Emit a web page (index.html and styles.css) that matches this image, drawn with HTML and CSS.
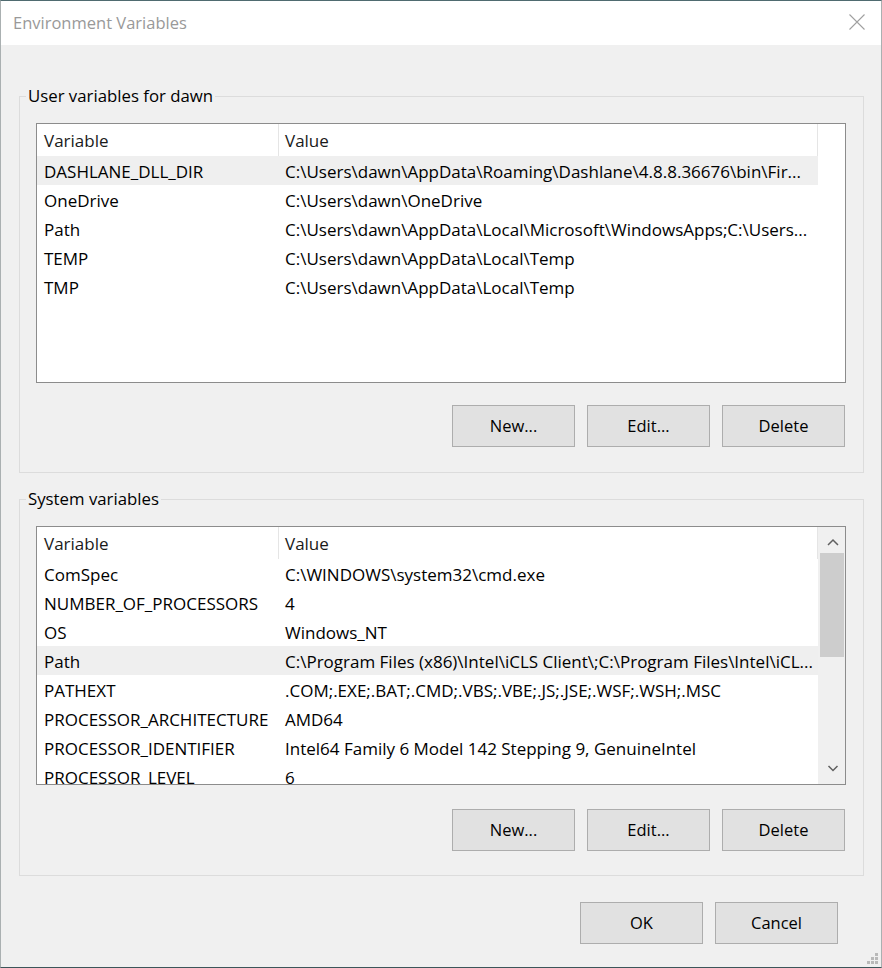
FILE: index.html
```html
<!DOCTYPE html>
<html lang="en">
<head>
<meta charset="utf-8">
<title>Environment Variables</title>
<link rel="stylesheet" href="styles.css">
</head>
<body>
<div class="window">
  <div class="titlebar">
    <span class="title">Environment Variables</span>
    <svg class="close" width="16" height="16" viewBox="0 0 16 16"><path d="M0.5 0.5 L15.5 15.5 M15.5 0.5 L0.5 15.5" stroke="#a0a0a0" stroke-width="1.1" fill="none"/></svg>
  </div>
  <div class="content">
    <fieldset class="group group-user">
      <legend>User variables for dawn</legend>
      <div class="list">
        <div class="table">
          <div class="hdr"><div class="c1">Variable</div><div class="c2">Value</div></div>
          <div class="row sel"><div class="c1">DASHLANE_DLL_DIR</div><div class="c2">C:\Users\dawn\AppData\Roaming\Dashlane\4.8.8.36676\bin\Fir...</div></div>
          <div class="row"><div class="c1">OneDrive</div><div class="c2">C:\Users\dawn\OneDrive</div></div>
          <div class="row"><div class="c1">Path</div><div class="c2">C:\Users\dawn\AppData\Local\Microsoft\WindowsApps;C:\Users...</div></div>
          <div class="row"><div class="c1">TEMP</div><div class="c2">C:\Users\dawn\AppData\Local\Temp</div></div>
          <div class="row"><div class="c1">TMP</div><div class="c2">C:\Users\dawn\AppData\Local\Temp</div></div>
        </div>
      </div>
      <div class="btnrow">
        <button class="btn">New...</button>
        <button class="btn">Edit...</button>
        <button class="btn">Delete</button>
      </div>
    </fieldset>
    <fieldset class="group group-sys">
      <legend>System variables</legend>
      <div class="list list-sys">
        <div class="table">
          <div class="hdr"><div class="c1">Variable</div><div class="c2">Value</div></div>
          <div class="row"><div class="c1">ComSpec</div><div class="c2">C:\WINDOWS\system32\cmd.exe</div></div>
          <div class="row"><div class="c1">NUMBER_OF_PROCESSORS</div><div class="c2">4</div></div>
          <div class="row"><div class="c1">OS</div><div class="c2">Windows_NT</div></div>
          <div class="row sel"><div class="c1">Path</div><div class="c2">C:\Program Files (x86)\Intel\iCLS Client\;C:\Program Files\Intel\iCL...</div></div>
          <div class="row"><div class="c1">PATHEXT</div><div class="c2">.COM;.EXE;.BAT;.CMD;.VBS;.VBE;.JS;.JSE;.WSF;.WSH;.MSC</div></div>
          <div class="row"><div class="c1">PROCESSOR_ARCHITECTURE</div><div class="c2">AMD64</div></div>
          <div class="row"><div class="c1">PROCESSOR_IDENTIFIER</div><div class="c2">Intel64 Family 6 Model 142 Stepping 9, GenuineIntel</div></div>
          <div class="row"><div class="c1">PROCESSOR_LEVEL</div><div class="c2">6</div></div>
        </div>
        <div class="scrollbar">
          <svg class="sb-btn" width="27" height="26" viewBox="0 0 27 26"><path d="M9 18 L14 13 L19 18" stroke="#606060" stroke-width="1.5" fill="none"/></svg>
          <div class="sb-track"><div class="sb-thumb"></div></div>
          <svg class="sb-btn" width="27" height="26" viewBox="0 0 27 26"><path d="M9.5 8 L14 12.5 L18.5 8" stroke="#606060" stroke-width="1.5" fill="none"/></svg>
        </div>
      </div>
      <div class="btnrow">
        <button class="btn">New...</button>
        <button class="btn">Edit...</button>
        <button class="btn">Delete</button>
      </div>
    </fieldset>
    <div class="dlgbtns">
      <button class="btn">OK</button>
      <button class="btn">Cancel</button>
    </div>
    <svg class="grip" width="12" height="12" viewBox="0 0 12 12">
      <rect x="8" y="0" width="3" height="3" fill="#b9b9b9"/>
      <rect x="4" y="4" width="3" height="3" fill="#b9b9b9"/>
      <rect x="8" y="4" width="3" height="3" fill="#b9b9b9"/>
      <rect x="0" y="8" width="3" height="3" fill="#b9b9b9"/>
      <rect x="4" y="8" width="3" height="3" fill="#b9b9b9"/>
      <rect x="8" y="8" width="3" height="3" fill="#b9b9b9"/>
    </svg>
  </div>
</div>
</body>
</html>
```
FILE: styles.css
```css
html, body {
  margin: 0;
  padding: 0;
  background: #2f4b50;
}
* { box-sizing: border-box; }

.window {
  width: 882px;
  height: 968px;
  border: 1px solid;
  border-color: #4f6b70 #aab0b1 #3d5559 #aab0b1;
  background: #f0f0f0;
  font-family: "Open Sans", "Noto Sans", sans-serif;
  font-size: 16.5px;
  color: #000;
  display: flex;
  flex-direction: column;
}

.titlebar {
  height: 44px;
  background: #fff;
  display: flex;
  justify-content: space-between;
  align-items: flex-start;
  padding: 0 16px 0 12px;
}
.title {
  line-height: 44px;
  color: #999;
}
.close {
  margin-top: 13px;
  display: block;
}

.content {
  position: relative;
  flex: 1;
  padding: 0 17px 0 18px;
}

.group {
  margin: 0;
  border: 1px solid #dcdcdc;
  padding: 0 17px 0 16px;
  min-width: 0;
}
.group legend {
  padding: 0 2px;
  margin-left: -10px;
  line-height: 24px;
  font-size: 16.8px;
}
.group-user { margin-top: 39px; padding-bottom: 25px; }
.group-sys { margin-top: 14px; padding-bottom: 24px; }
.group-user .btnrow { margin-top: 22px; }
.group-sys .btnrow { margin-top: 24px; }

.list {
  margin-top: 15px;
  width: 810px;
  height: 260px;
  border: 1px solid #8c8c8c;
  background: #fff;
  display: flex;
  overflow: hidden;
  font-size: 17px;
}
.list-sys { height: 259px; }
.table {
  width: 781px;
  flex: none;
  overflow: hidden;
}
.hdr {
  display: flex;
  height: 32px;
  color: #1a1a1a;
}
.hdr > div {
  padding-top: 2px;
  line-height: 30px;
  border-right: 1px solid #e5e5e5;
}
.row {
  display: flex;
  height: 29px;
  line-height: 31px;
}
.row.sel { background: #efefef; }
.c1, .c2 {
  white-space: nowrap;
  overflow: hidden;
}
.c1 { width: 242px; padding-left: 7px; flex: none; }
.c2 { width: 539px; padding-left: 6px; flex: none; }

.scrollbar {
  width: 27px;
  flex: none;
  background: #f0f0f0;
  display: flex;
  flex-direction: column;
  border-left: 1px solid #f0f0f0;
}
.sb-btn { display: block; flex: none; }
.sb-track { flex: 1; }
.sb-thumb {
  margin-left: 1px;
  width: 24px;
  height: 104px;
  background: #cdcdcd;
}

.btnrow {
  display: flex;
  justify-content: flex-end;
  gap: 12px;
  padding-right: 1px;
}
.btn {
  width: 123px;
  height: 42px;
  border: 1px solid #adadad;
  background: #e1e1e1;
  font-family: inherit;
  font-size: 16.5px;
  color: #000;
  padding: 0;
  line-height: 40px;
  margin: 0;
}
.dlgbtns {
  display: flex;
  justify-content: flex-end;
  gap: 12px;
  margin-top: 26px;
  padding-right: 26px;
}
.grip {
  position: absolute;
  right: 2px;
  bottom: 2px;
  display: block;
}
```
